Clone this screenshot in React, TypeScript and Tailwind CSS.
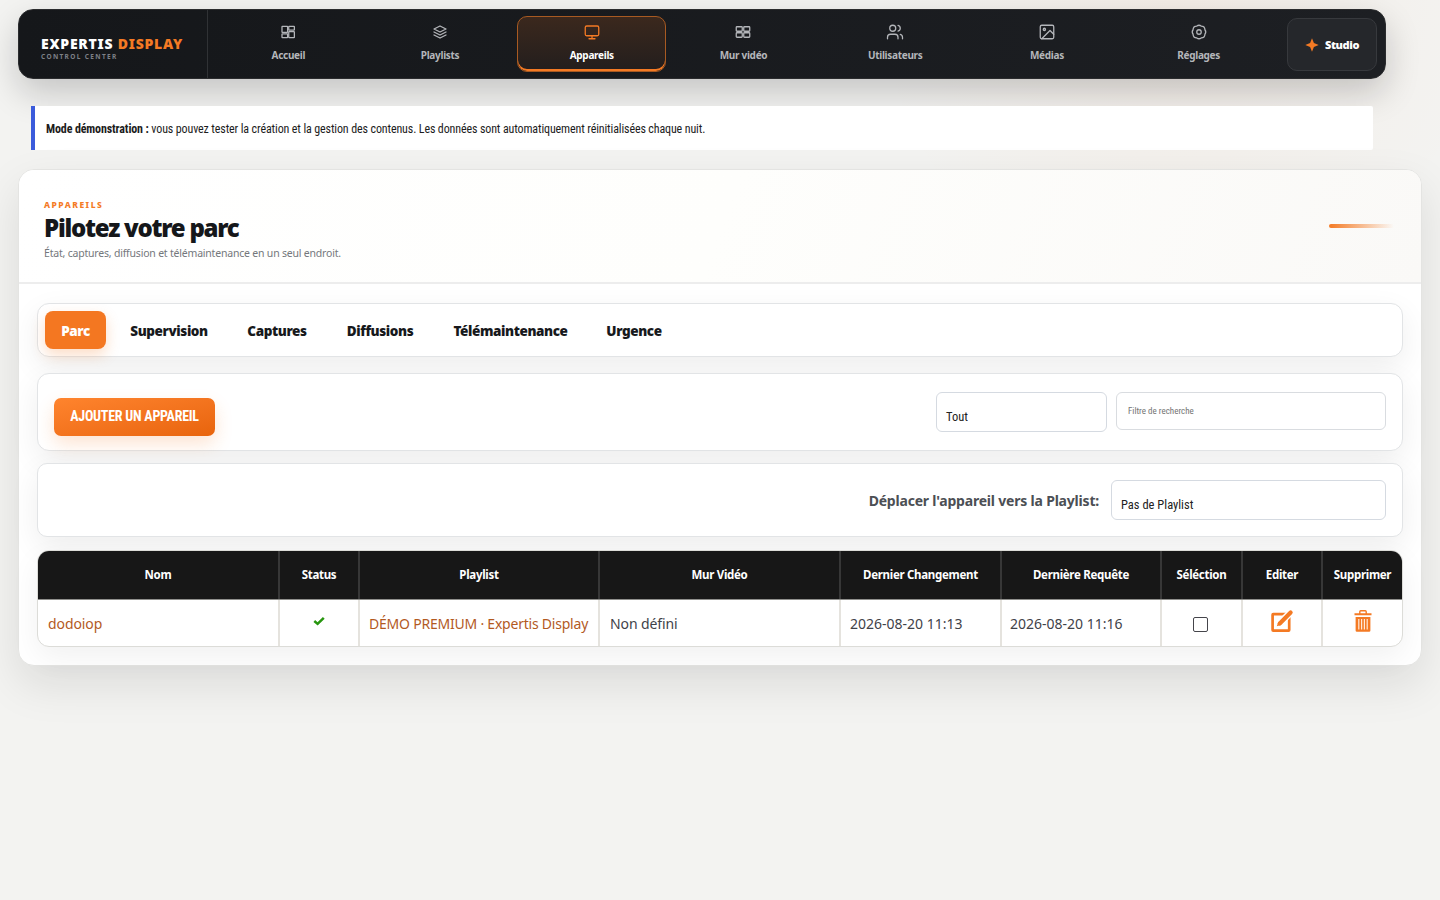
import type { ReactNode } from "react";

const navItems: { label: string; icon: ReactNode; active?: boolean }[] = [
  {
    label: "Accueil",
    icon: (
      <>
        <rect x="4" y="4.5" width="7.5" height="8" rx="0.6" />
        <rect x="13" y="4.5" width="7.5" height="5" rx="0.6" />
        <rect x="4" y="14.5" width="7.5" height="5" rx="0.6" />
        <rect x="13" y="11.5" width="7.5" height="8" rx="0.6" />
      </>
    ),
  },
  {
    label: "Playlists",
    icon: <path d="m12 4 8 4-8 4-8-4 8-4ZM4 12l8 4 8-4M4 16l8 4 8-4" />,
  },
  {
    label: "Appareils",
    active: true,
    icon: (
      <>
        <rect x="3" y="4" width="18" height="13" rx="2" />
        <path d="M8 21h8M12 17v4" />
      </>
    ),
  },
  {
    label: "Mur vidéo",
    icon: (
      <>
        <rect x="3" y="5" width="8" height="6" rx="1" />
        <rect x="13" y="5" width="8" height="6" rx="1" />
        <rect x="3" y="13" width="8" height="6" rx="1" />
        <rect x="13" y="13" width="8" height="6" rx="1" />
      </>
    ),
  },
  {
    label: "Utilisateurs",
    icon: (
      <>
        <path d="M16 21v-2a4 4 0 0 0-4-4H6a4 4 0 0 0-4 4v2M22 21v-2a4 4 0 0 0-3-3.87M16 3.13a4 4 0 0 1 0 7.75" />
        <circle cx="9" cy="7" r="4" />
      </>
    ),
  },
  {
    label: "Médias",
    icon: (
      <>
        <rect x="3" y="3" width="18" height="18" rx="2" />
        <circle cx="8.5" cy="8.5" r="1.5" />
        <path d="m21 15-5-5L5 21" />
      </>
    ),
  },
  {
    label: "Réglages",
    icon: (
      <>
        <circle cx="12" cy="12" r="3" />
        <path d="M9 4.1a5 5 0 0 1 6 0 5 5 0 0 1 4.9 4.9 5 5 0 0 1 0 6 5 5 0 0 1-4.9 4.9 5 5 0 0 1-6 0 5 5 0 0 1-4.9-4.9 5 5 0 0 1 0-6A5 5 0 0 1 9 4.1Z" />
      </>
    ),
  },
];

const tabs = [
  { label: "Supervision", width: "w-[118px]" },
  { label: "Captures", width: "w-[98px]" },
  { label: "Diffusions", width: "w-[108px]" },
  { label: "Télémaintenance", width: "w-[153px]" },
  { label: "Urgence", width: "w-[94px]" },
];

const columns = [
  "Nom",
  "Status",
  "Playlist",
  "Mur Vidéo",
  "Dernier Changement",
  "Dernière Requête",
  "Séléction",
  "Editer",
  "Supprimer",
];

const tableGrid =
  "grid grid-cols-[242px_80px_240px_241px_161px_160px_81px_80px_1fr]";

const condensed =
  "font-['Roboto_Condensed','Roboto',sans-serif] [font-stretch:75%]";

const panel =
  "border border-[#e2e4e6] bg-white shadow-[0_10px_30px_rgba(20,20,20,0.07)]";

function TopBar() {
  return (
    <header className="ml-[18px] flex h-[70px] w-[1368px] rounded-[15px] border border-[#2b2c2e] bg-gradient-to-r from-[#15171a] to-[#1d1f23] shadow-[0_14px_34px_rgba(15,17,20,0.2)]">
      <div className="flex w-[189px] shrink-0 flex-col justify-center border-r border-[#303235] pl-[22px] pt-[8px]">
        <div className="whitespace-nowrap text-[14px] font-black leading-[16px] tracking-[0.75px] text-white">
          EXPERTIS <span className="text-[#f47a24]">DISPLAY</span>
        </div>
        <div className="mt-px text-[6.5px] font-bold leading-[8px] tracking-[1.35px] text-[#7d8087]">
          CONTROL CENTER
        </div>
      </div>

      <nav className="ml-[5.5px] grid w-[1059px] shrink-0 grid-cols-7 gap-[3px] py-1.5">
        {navItems.map((item) => (
          <a
            key={item.label}
            className={[
              "flex flex-col items-center rounded-[10px] border pt-[6px]",
              item.active
                ? "border-[#a85a22] bg-gradient-to-b from-[#3b281d] to-[#231e1d] text-[#f47a24] shadow-[inset_0_-2px_0_#f47a24]"
                : "border-transparent text-[#b4b6ba]",
            ].join(" ")}
          >
            <svg
              viewBox="0 0 24 24"
              className="ml-px h-[18px] w-[18px]"
              fill="none"
              stroke="currentColor"
              strokeWidth="1.7"
              strokeLinecap="round"
              strokeLinejoin="round"
              aria-hidden="true"
            >
              {item.icon}
            </svg>
            <span
              className={[
                "ml-px mt-[6px] text-[10px] font-bold leading-[16px] tracking-[-0.3px]",
                item.active ? "text-white" : "",
              ].join(" ")}
            >
              {item.label}
            </span>
          </a>
        ))}
      </nav>

      <a className="ml-[14.5px] mt-2 flex h-[53px] w-[90px] items-center justify-center gap-[6px] rounded-[10px] border border-[#37393d] bg-[#25272b] pt-px text-[11px] font-black tracking-[-0.4px] text-white">
        <svg viewBox="0 0 14 14" className="h-[14px] w-[14px]" aria-hidden="true">
          <path d="M7 0.3 8.9 5.1 13.7 7 8.9 8.9 7 13.7 5.1 8.9 0.3 7 5.1 5.1Z" fill="#f47a24" />
        </svg>
        Studio
      </a>
    </header>
  );
}

function DevicesTable() {
  return (
    <div className="mt-[13px] overflow-hidden rounded-[12px] border border-[#dcdcd8] bg-white shadow-[0_10px_30px_rgba(20,20,20,0.06)]">
      <div className={`${tableGrid} h-[49px] border-b border-[#8f8f8c] bg-[#171717]`}>
        {columns.map((name) => (
          <div
            key={name}
            className="flex items-center justify-center whitespace-nowrap border-r-2 border-[#373737] text-[11.5px] font-bold tracking-[-0.3px] text-white last:border-r-0"
          >
            {name}
          </div>
        ))}
      </div>
      <div
        className={`${tableGrid} h-[46px] whitespace-nowrap text-[14px] text-[#3f4249] [&>div]:flex [&>div]:items-center [&>div]:border-r-2 [&>div]:border-[#e5e3de] [&>div:last-child]:border-r-0`}
      >
        <div className="pl-[10px] tracking-[-0.1px] text-[#b35a1f]">dodoiop</div>
        <div className="justify-center">
          <svg viewBox="0 0 12 10" className="-mt-[5px] h-[10px] w-[12px]" aria-hidden="true">
            <path d="M1.3 5 4.6 7.9 10.8 1.8" fill="none" stroke="#27960f" strokeWidth="2.5" />
          </svg>
        </div>
        <div className="pl-[9px] tracking-[-0.22px] text-[#b35a1f]">
          DÉMO PREMIUM · Expertis Display
        </div>
        <div className="pl-[10px] tracking-[-0.1px]">Non défini</div>
        <div className="pl-[9px]">2026-08-20 11:13</div>
        <div className="pl-[8px]">2026-08-20 11:16</div>
        <div className="justify-center">
          <span className="-ml-[3px] mt-[3px] h-[15px] w-[15px] rounded-[2px] border border-[#45454b] bg-white" />
        </div>
        <div className="justify-center">
          <svg viewBox="0 0 24 24" className="-mt-[5px] h-[24px] w-[24px]" aria-hidden="true">
            <rect
              x="2.6"
              y="5.2"
              width="16.6"
              height="16.4"
              rx="0.6"
              fill="none"
              stroke="#f47a24"
              strokeWidth="2.7"
            />
            <path d="m8.5 15.5 12.3-12.3" stroke="#fff" strokeWidth="7" />
            <path d="m9.8 14.4 10.8-10.8" stroke="#f47a24" strokeWidth="4.2" strokeLinecap="round" />
            <path d="m8.3 12.7-1.5 4.5 4.5-1.4Z" fill="#f47a24" />
          </svg>
        </div>
        <div className="justify-center">
          <svg viewBox="0 0 18 22" className="-mt-[5px] h-[22px] w-[18px]" aria-hidden="true">
            <path d="M5.8 4V1.7q0-.9.9-.9h4.6q.9 0 .9.9V4" fill="none" stroke="#f47a24" strokeWidth="1.4" />
            <path d="M.5 3.3h17v2H.5z" fill="#f47a24" />
            <path d="M1.6 6.9h14.8v13.6q0 1.3-1.3 1.3H2.9q-1.3 0-1.3-1.3Z" fill="#f47a24" />
            <path d="M4.8 9v10.6M7.6 9v10.6M10.4 9v10.6M13.2 9v10.6" stroke="#ffe9d9" strokeWidth="1.2" />
          </svg>
        </div>
      </div>
    </div>
  );
}

export default function App() {
  return (
    <div className="h-[900px] w-[1440px] overflow-hidden bg-[#f3f3f1] bg-[radial-gradient(circle_at_82%_0%,rgba(244,122,36,0.05),transparent_310px)] pt-[9px] font-['Noto_Sans',sans-serif]">
      <TopBar />

      <div
        className={`${condensed} ml-[31px] mt-[27px] flex h-[44px] w-[1342px] items-center whitespace-pre rounded-r-[2px] border-l-4 border-[#3b5bdb] bg-white pl-[11px] pt-px text-[12px] tracking-[-0.125px] text-[#1c1c1c]`}
      >
        <b className="font-bold">Mode démonstration :</b> vous pouvez tester la création et la gestion des contenus. Les données sont automatiquement réinitialisées chaque nuit.
      </div>

      <main className="ml-[18px] mt-[19px] h-[497px] w-[1404px] rounded-[16px] border border-[#e4e4e2] bg-white shadow-[0_18px_45px_rgba(20,20,20,0.1)]">
        <div className="flex h-[114px] items-center justify-between rounded-t-[15px] border-b-2 border-[#ededed] bg-[linear-gradient(110deg,#ffffff_0%,#fefefc_50%,#faf9f7_100%)] pl-[25px] pr-[27px]">
          <div className="pt-[7px]">
            <div className="text-[8.5px] font-extrabold leading-[12px] tracking-[1.5px] text-[#f47a24]">
              APPAREILS
            </div>
            <h1 className="mt-[2px] whitespace-nowrap text-[24px] font-black leading-[30px] tracking-[-1.25px] text-[#15171a]">
              Pilotez votre parc
            </h1>
            <p className="mt-[2px] whitespace-nowrap text-[10.5px] leading-[16px] tracking-[-0.2px] text-[#74777c]">
              État, captures, diffusion et télémaintenance en un seul endroit.
            </p>
          </div>
          <span className="h-1 w-[65px] rounded-full bg-gradient-to-r from-[#f47a24] to-transparent" />
        </div>

        <div className="px-[18px] pt-[19px]">
          <div
            className={`${panel} flex h-[54px] items-center rounded-[12px] pl-[7px] text-[13.5px] font-black tracking-[-0.4px] text-[#17191c]`}
          >
            <div className="mr-[4px] flex h-[38px] w-[61px] items-center justify-center rounded-[8px] bg-[#f47721] pt-[2px] text-white shadow-[0_6px_14px_rgba(244,119,33,0.25)]">
              Parc
            </div>
            {tabs.map((tab) => (
              <div
                key={tab.label}
                className={`${tab.width} flex shrink-0 justify-center whitespace-nowrap pt-[2px]`}
              >
                {tab.label}
              </div>
            ))}
          </div>

          <div className={`${panel} mt-[16px] flex h-[78px] items-start rounded-[12px] px-4 pt-[18px]`}>
            <button
              className={`${condensed} mt-[6px] h-[38px] w-[161px] whitespace-nowrap rounded-[7px] bg-gradient-to-br from-[#ff842d] to-[#e8640b] pb-px text-[14px] font-bold tracking-[-0.25px] text-white shadow-[0_8px_18px_rgba(244,119,33,0.2)]`}
            >
              AJOUTER UN APPAREIL
            </button>
            <div
              className={`${condensed} ml-auto h-[40px] w-[171px] rounded-[6px] border border-[#d5dae1] bg-white pl-[9px] pt-[14px] text-[12.5px] leading-[20px] text-[#222]`}
            >
              Tout
            </div>
            <div
              className={`${condensed} ml-[9px] h-[38px] w-[270px] rounded-[6px] border border-[#d9dce0] bg-white pl-[11px] pt-[9px] text-[9px] leading-[18px] text-[#747474]`}
            >
              Filtre de recherche
            </div>
          </div>

          <div className={`${panel} mt-[12px] flex h-[74px] items-center justify-end rounded-[10px] px-4`}>
            <span className="mr-[12px] whitespace-nowrap text-[14px] font-bold tracking-[-0.2px] text-[#4c4f54]">
              Déplacer l'appareil vers la Playlist:
            </span>
            <div
              className={`${condensed} h-[40px] w-[275px] rounded-[6px] border border-[#d5dae1] bg-white pl-[9px] pt-[14px] text-[12.5px] leading-[20px] text-[#222]`}
            >
              Pas de Playlist
            </div>
          </div>

          <DevicesTable />
        </div>
      </main>
    </div>
  );
}
